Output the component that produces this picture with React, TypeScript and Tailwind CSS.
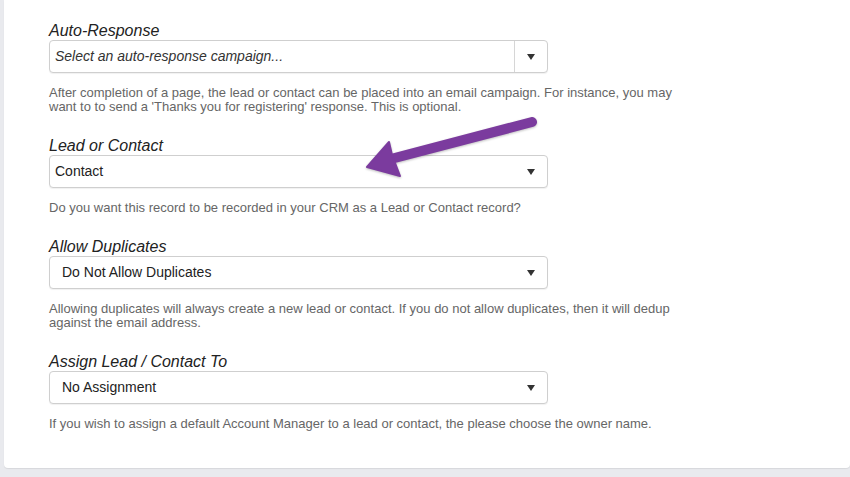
import { ReactNode } from 'react'

type FieldProps = {
  label: string
  value: string
  placeholder?: boolean
  split?: boolean
  inset?: boolean
  help: ReactNode
}

function Caret() {
  return (
    <svg width="8" height="6" viewBox="0 0 8 6" className="shrink-0">
      <path d="M0 0 H8 L4 6 Z" fill="#333" />
    </svg>
  )
}

function Field({ label, value, placeholder, split, inset, help }: FieldProps) {
  return (
    <div className="mb-[20px]">
      <div className="h-[21px] text-[16px] leading-[23px] italic text-[#222]">{label}</div>

      {/* select */}
      <div className="w-[499px] h-[33px] flex items-stretch rounded-[4px] border border-[#cfcfcf] bg-white shadow-[0_1px_1px_rgba(0,0,0,0.06)]">
        <div
          className={`flex-1 flex items-center text-[14px] text-[#222] ${inset ? 'pl-[12px]' : 'pl-[5px]'} ${placeholder ? 'italic text-[#333]' : ''}`}
        >
          {value}
        </div>
        {split ? (
          <div className="w-[33px] border-l border-[#d6d6d6] flex items-center justify-center">
            <Caret />
          </div>
        ) : (
          <div className="w-[33px] flex items-center justify-center">
            <Caret />
          </div>
        )}
      </div>

      <p className="mt-[13px] text-[13px] leading-[14px] text-[#666] w-[640px]">{help}</p>
    </div>
  )
}

export default function App() {
  return (
    <div className="w-[850px] h-[477px] bg-[#e9eaee] overflow-hidden" style={{ fontFamily: '"Liberation Sans", Arial, sans-serif' }}>
      <div className="relative ml-[4px] h-[468px] bg-white rounded-b-[4px] shadow-[0_1px_1px_rgba(0,0,0,0.08)] pt-[19px] pl-[45px]">
        <Field
          label="Auto-Response"
          value="Select an auto-response campaign..."
          placeholder
          split
          help={
            <>
              After completion of a page, the lead or contact can be placed into an email campaign. For instance, you may
              <br />
              want to to send a 'Thanks you for registering' response. This is optional.
            </>
          }
        />
        <Field
          label="Lead or Contact"
          value="Contact"
          help="Do you want this record to be recorded in your CRM as a Lead or Contact record?"
        />
        <Field
          label="Allow Duplicates"
          value="Do Not Allow Duplicates"
          inset
          help={
            <>
              Allowing duplicates will always create a new lead or contact. If you do not allow duplicates, then it will dedup
              <br />
              against the email address.
            </>
          }
        />
        <Field
          label="Assign Lead / Contact To"
          value="No Assignment"
          inset
          help="If you wish to assign a default Account Manager to a lead or contact, the please choose the owner name."
        />

        {/* annotation arrow */}
        <svg
          className="absolute left-[351px] top-[110px] pointer-events-none"
          width="190"
          height="75"
          viewBox="0 0 190 75"
          style={{ filter: 'drop-shadow(0 1px 1px rgba(0,0,0,0.25))' }}
        >
          <line x1="32" y1="50" x2="177" y2="12" stroke="#7b3b9e" strokeWidth="10" strokeLinecap="round" />
          <path d="M12 57 L34 32 L37 45 L45 66 Z" fill="#7b3b9e" strokeLinejoin="round" stroke="#7b3b9e" strokeWidth="2" />
        </svg>
      </div>
    </div>
  )
}
